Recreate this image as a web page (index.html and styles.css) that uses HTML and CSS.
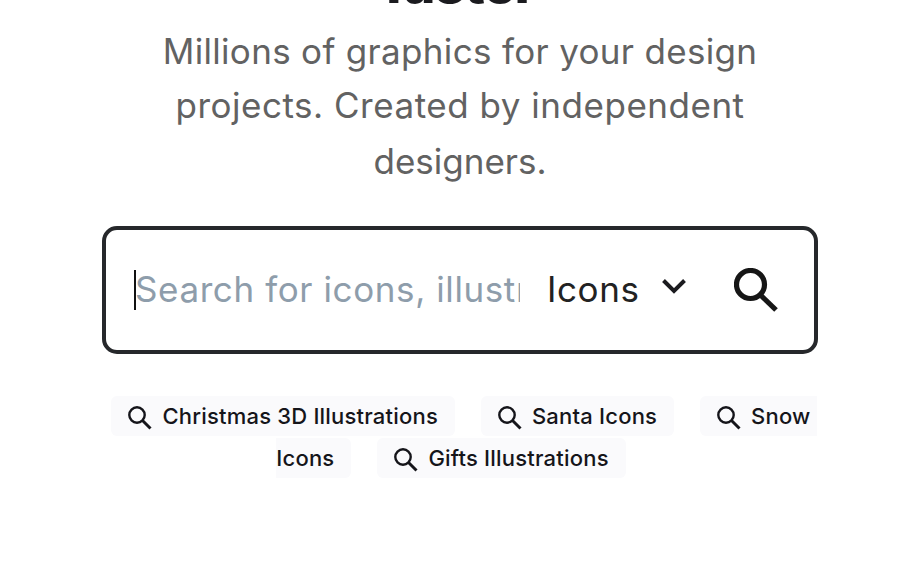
FILE: index.html
```html
<!DOCTYPE html>
<html lang="en"><head><meta charset="utf-8"><title>Design assets</title><link rel="stylesheet" href="styles.css"></head>
<body>
<svg class="defs" aria-hidden="true"><symbol id="glass" viewBox="0 0 24 24"><g fill="none" stroke="currentColor"><circle cx="9" cy="9" r="7.7" stroke-width="2.4"/><path d="M14.500 14.500L22.500 22.500" stroke-width="3"/></g></symbol></svg>
<main class="hero">
<h1 class="title">faster</h1>
<p class="lead"><span class="line">Millions of graphics for your design</span> <span class="line line-wide">projects. Created by independent</span> <span class="line line-last">designers.</span></p>
<div class="search">
<span class="caret"></span><span class="placeholder">Search for icons, illustrations</span>
<span class="type">Icons</span>
<svg class="chevron" viewBox="0 0 24 15"><path d="M1.500 1.500l10.500 10.500L22.500 1.500"/></svg>
<svg class="submit" viewBox="0 0 44 44"><circle cx="16.500" cy="16.500" r="14"/><path d="M27.500 28L42 42"/></svg>
</div>
<div class="tags">
<a class="tag"><svg class="glass"><use href="#glass"/></svg>Christmas 3D Illustrations</a><a class="tag"><svg class="glass"><use href="#glass"/></svg>Santa Icons</a><a class="tag"><svg class="glass"><use href="#glass"/></svg><span class="break">Snow</span><br>Icons</a><a class="tag"><svg class="glass"><use href="#glass"/></svg>Gifts Illustrations</a>
</div>
</main>
</body></html>
```
FILE: styles.css
```css
* { box-sizing: border-box; }
body { margin: 0; background: #fff; font-family: Inter, sans-serif; overflow: hidden; }
.defs { display: none; }
.hero { width: 716px; margin: 0 auto; padding-top: .1px; text-align: center; }
.title { margin: -50px 0 0; height: 74px; line-height: 68px; font-size: 54px; font-weight: 800; letter-spacing: -1.1px; color: #1b1b1f; }
.lead { margin: 0; font-size: 35px; line-height: 55px; letter-spacing: .32px; color: #626262; }
.line { display: block; }
.line-wide { line-height: 53px; letter-spacing: .52px; }
.line-last { line-height: 59px; letter-spacing: 0; }
.search { display: flex; align-items: center; height: 128px; margin-top: 35px; padding: 0 37px 0 28px; border: 4px solid #26282b; border-radius: 15px; font-size: 35px; letter-spacing: .6px; white-space: nowrap; }
.caret { flex: none; width: 2px; height: 40px; background: #111; margin-right: -1px; }
.placeholder { flex: none; width: 385px; margin-top: -2px; overflow: hidden; text-align: left; color: #8e9dab; }
.type { flex: none; width: 115px; margin: -2px 0 0 27px; text-align: left; color: #222; }
.chevron { flex: none; width: 24px; height: 15px; margin-top: -7px; fill: none; stroke: #1b1b1f; stroke-width: 4; }
.submit { flex: none; width: 44px; height: 44px; margin: -1px -1px 0 auto; fill: none; stroke: #161616; stroke-width: 5.2; }
.tags { margin-top: 41px; font-size: 22px; font-weight: 500; line-height: 42px; letter-spacing: .2px; color: #15151a; white-space: nowrap; }
.tag { padding: 7px 17px; margin: 0 18px 0 8px; background: #fafafc; border-radius: 6px; }
.break { padding-right: 6px; }
.glass { width: 24px; height: 24px; margin-right: 10px; vertical-align: -6px; }
```
